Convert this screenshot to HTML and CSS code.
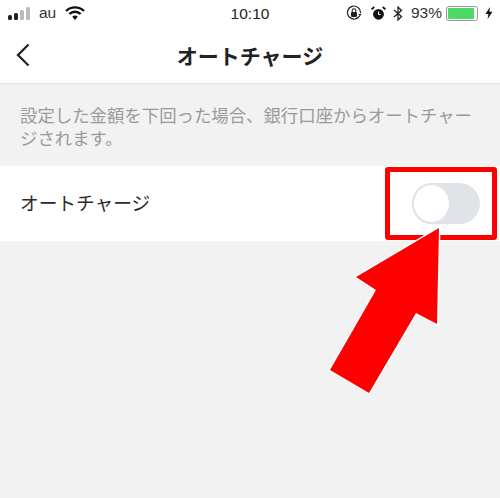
FILE: index.html
```html
<!DOCTYPE html>
<html lang="ja">
<head>
<meta charset="utf-8">
<title>オートチャージ</title>
<link rel="stylesheet" href="styles.css">
</head>
<body>
<div class="screen">
  <div class="status">
    <div class="status-left">
      <svg class="signal" width="24" height="14" viewBox="0 0 24 14"><rect x="0" y="8" width="4" height="5" rx="1.5" fill="#222"/><rect x="6" y="6" width="4" height="7" rx="1.5" fill="#222"/><rect x="12" y="3" width="4" height="10" rx="1.5" fill="#bbb"/><rect x="18" y="0" width="4" height="13" rx="1.5" fill="#bbb"/></svg>
      <span class="carrier">au</span>
      <svg class="wifi" width="20" height="14" viewBox="0 0 20 14"><path d="M1 5 A13 13 0 0 1 19 5" fill="none" stroke="#111" stroke-width="2.4"/><path d="M4.4 8 A8 8 0 0 1 15.6 8" fill="none" stroke="#111" stroke-width="2.4"/><path d="M7.2 10.8 L10 14 L12.8 10.8 A4 4 0 0 0 7.2 10.8 Z" fill="#111"/></svg>
    </div>
    <div class="clock">10:10</div>
    <div class="status-right">
      <svg class="lock" width="16" height="16" viewBox="0 0 16 16"><path d="M13.8 10.5 A6.5 6.5 0 1 1 14.5 8" fill="none" stroke="#222" stroke-width="1.2"/><path d="M12.3 9 L14.2 11 L15.6 8.8 Z" fill="#222"/><rect x="5" y="7" width="6" height="5" rx="1" fill="#222"/><path d="M6.2 7 V5.6 a1.8 1.8 0 0 1 3.6 0 V7" fill="none" stroke="#222" stroke-width="1.1"/></svg>
      <svg class="alarm" width="15" height="15" viewBox="0 0 15 15"><circle cx="7.5" cy="8.3" r="5.4" fill="#111"/><path d="M7.5 5.5 V8.5 H9.6" fill="none" stroke="#fff" stroke-width="1"/><path d="M0.6 3.4 L3.2 1 M14.4 3.4 L11.8 1" stroke="#111" stroke-width="1.8"/></svg>
      <svg class="bt" width="10" height="15" viewBox="0 0 10 15"><path d="M1 4 L8.5 10.5 L5 14 V1 L8.5 4.5 L1 11" fill="none" stroke="#222" stroke-width="1.3"/></svg>
      <span class="pct">93%</span>
      <div class="battery"><div class="battery-level"></div></div>
      <svg class="bolt" width="8" height="12" viewBox="0 0 8 12"><path d="M5 0 L0.5 7 H3.4 L2.6 12 L7.5 4.8 H4.4 Z" fill="#111"/></svg>
    </div>
  </div>
  <header class="nav">
    <svg class="back" width="16" height="24" viewBox="0 0 16 24"><path d="M13.5 1.5 L3 12 L13.5 22.5" fill="none" stroke="#222" stroke-width="2.3"/></svg>
    <h1 class="title">オートチャージ</h1>
  </header>
  <p class="desc">設定した金額を下回った場合、銀行口座からオートチャージされます。</p>
  <div class="row">
    <span class="row-label">オートチャージ</span>
    <div class="toggle"><div class="knob"></div></div>
  </div>
  <div class="highlight"></div>
  <svg class="arrow" width="500" height="498" viewBox="0 0 500 498"><polygon class="arrow-shape" points="439,228 356,277 376,290 330,370 369,393 416,313 437,324"/></svg>
</div>
</body>
</html>
```
FILE: styles.css
```css
* { box-sizing: border-box; }
html, body { margin: 0; padding: 0; }
body { width: 500px; height: 498px; overflow: hidden; background: #f2f2f2; font-family: "Noto Sans CJK JP", "Liberation Sans", sans-serif; }
.screen { position: relative; width: 500px; height: 498px; }
.status { height: 28px; background: #fff; display: flex; align-items: center; justify-content: space-between; padding: 0 7px 2px 8px; position: relative; }
.status-left { display: flex; align-items: center; gap: 9px; }
.signal { margin-top: 1px; margin-right: -2px; }
.carrier { font-family: "Liberation Sans", sans-serif; font-size: 15.5px; color: #333; }
.clock { position: absolute; left: 0; right: 0; top: 4px; text-align: center; font-family: "Liberation Sans", sans-serif; font-size: 15.5px; line-height: 20px; color: #222; }
.status-right { display: flex; align-items: center; gap: 6px; }
.lock { margin-right: 3px; }
.alarm { margin-right: 1px; }
.pct { font-family: "Liberation Sans", sans-serif; font-size: 15.5px; color: #333; margin-left: 2px; margin-right: -2px; }
.battery { width: 32px; height: 15px; border: 1px solid #999; border-radius: 3px; padding: 1px; margin-right: 1px; }
.battery-level { width: 26px; height: 11px; background: #4cd964; border-radius: 1px; }
.nav { height: 56px; background: #fff; border-bottom: 1px solid #e2e2e2; display: flex; align-items: center; justify-content: center; position: relative; padding-bottom: 2px; }
.back { position: absolute; left: 15px; top: 15px; }
.title { margin: 0; font-size: 21px; font-weight: 700; color: #222; line-height: 28px; }
.desc { margin: 0; padding: 19px 20px 0; height: 82px; font-size: 17.4px; line-height: 23px; color: #9a9a9a; }
.row { height: 75px; background: #fff; display: flex; align-items: center; justify-content: space-between; padding: 0 20px; }
.row-label { font-size: 18.7px; color: #2a2a2a; line-height: 26px; margin-top: -3px; }
.toggle { width: 68px; height: 41px; border-radius: 21px; background: #e0e3e8; position: relative; }
.knob { position: absolute; left: 0; top: 0; width: 39px; height: 41px; border-radius: 50%; background: #fff; border: 2px solid #e0e3e8; }
.highlight { position: absolute; left: 385px; top: 167px; width: 112px; height: 73px; border: 5px solid #ff0000; border-radius: 3px; }
.arrow { position: absolute; left: 0; top: 0; }
.arrow-shape { fill: #ff0000; stroke: #fff; stroke-width: 3; paint-order: stroke; }
```
